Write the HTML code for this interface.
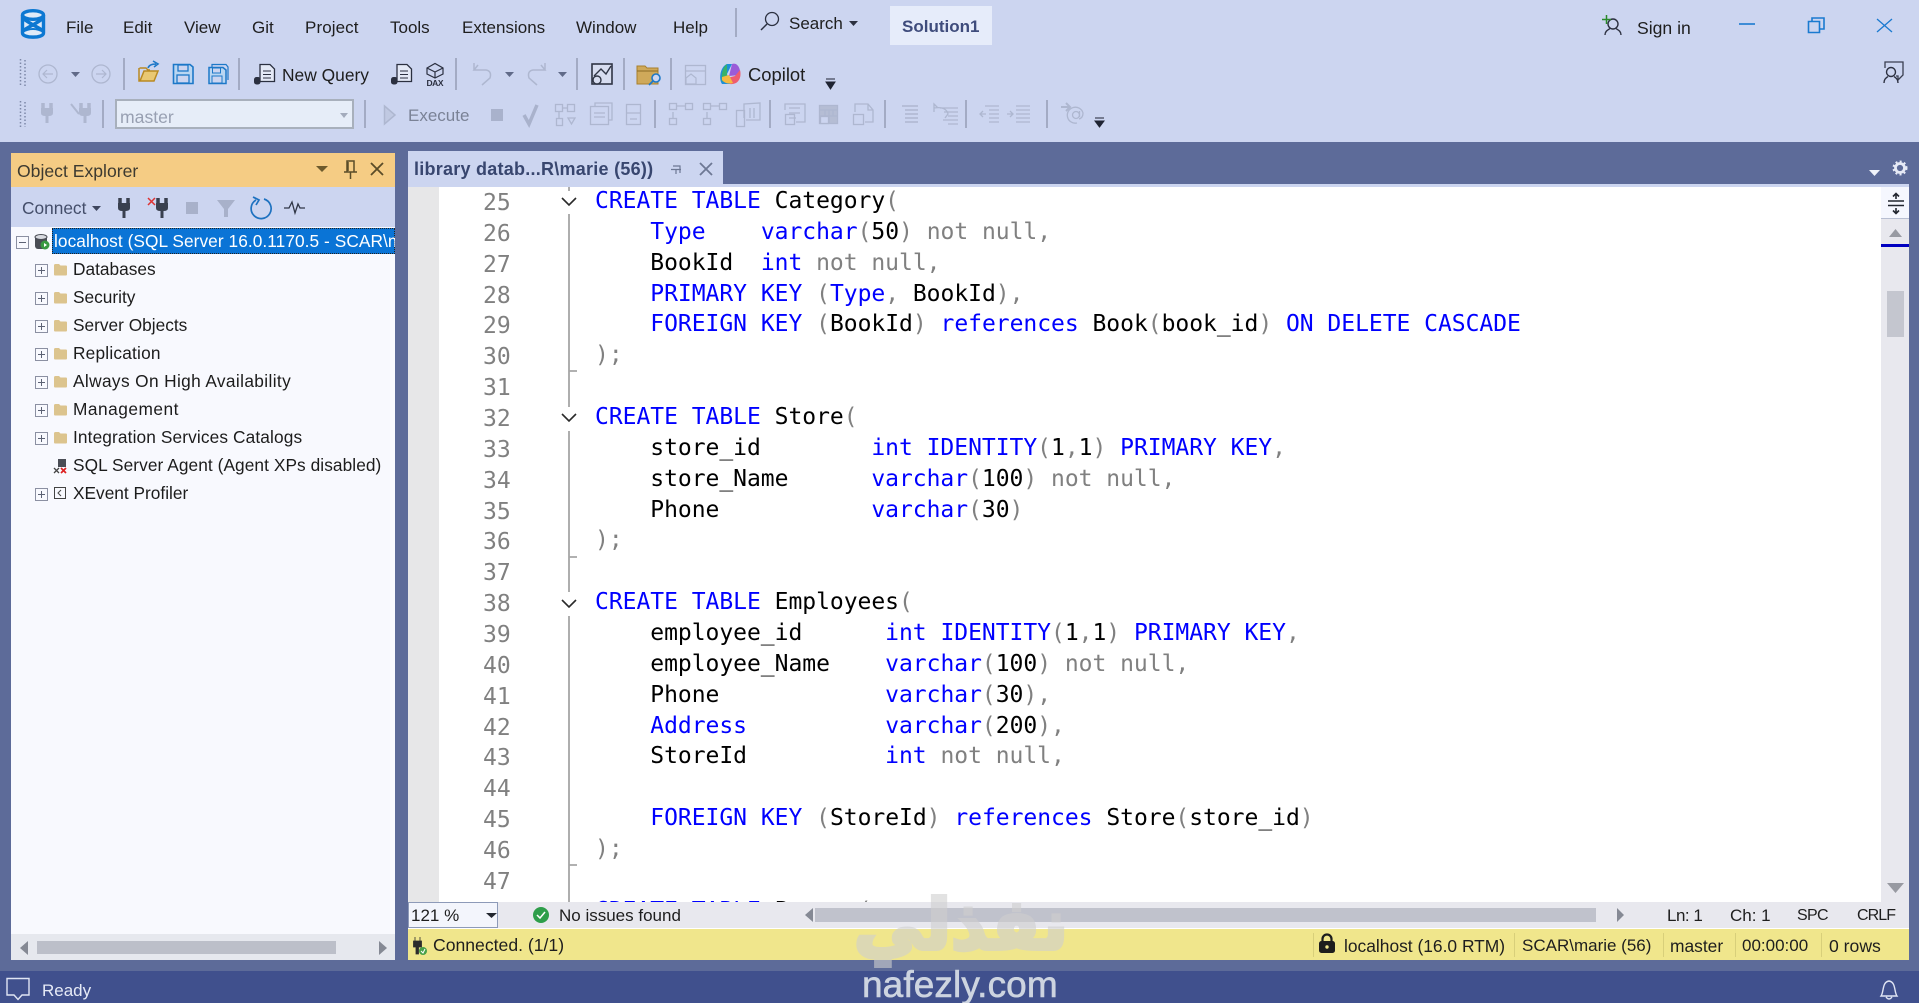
<!DOCTYPE html>
<html lang="en"><head><meta charset="utf-8"><title>SSMS</title>
<style>
html,body{margin:0;padding:0;width:1919px;height:1003px;overflow:hidden;background:#5d6b99}
body{position:relative;font-family:"Liberation Sans",sans-serif;font-size:17px;color:#1e1e1e}
.r{position:absolute}
.t{position:absolute;white-space:nowrap;line-height:20px;height:20px}
.ot{font-size:17.3px;color:#1c1c1c}
.sep{position:absolute;width:2px;background:#a3abc4}
pre{position:absolute;margin:0;font-family:"DejaVu Sans Mono",monospace;font-size:23px;line-height:30.86px;letter-spacing:-.03px}
.b{color:#0000ff}.g{color:#808080}
.s{position:absolute;width:1px;top:933px;height:24px;background:#d8cf7a}
</style></head><body>
<!-- backgrounds -->
<div class="r" style="left:0;top:0;width:1919px;height:142px;background:#ccd5f0"></div>
<div class="r" style="left:0;top:971px;width:1919px;height:32px;background:#40508d"></div>
<div class="r" style="left:11px;top:153px;width:384px;height:34px;background:#f5cc84"></div>
<div class="r" style="left:11px;top:187px;width:384px;height:40px;background:#ccd5f0"></div>
<div class="r" style="left:11px;top:227px;width:384px;height:707px;background:#f8f9fe"></div>
<div class="r" style="left:11px;top:934px;width:384px;height:26px;background:#e6e8ee"></div>
<div class="r" style="left:37px;top:941px;width:299px;height:13px;background:#bcbfc9"></div>
<div class="r" style="left:52px;top:228px;width:343px;height:26px;background:#0a74d6;outline:1px dotted #222;outline-offset:-1px"></div>
<div class="r" style="left:408px;top:151px;width:315px;height:33px;background:#ccd5f0"></div>
<div class="r" style="left:408px;top:184px;width:1501px;height:3px;background:#ccd5f0"></div>
<div class="r" style="left:408px;top:187px;width:1473px;height:715px;background:#fff"></div>
<div class="r" style="left:408px;top:187px;width:31px;height:715px;background:#e7e7e8"></div>
<div class="r" style="left:1881px;top:187px;width:28px;height:715px;background:#e8e8ee"></div>
<div class="r" style="left:1881px;top:187px;width:28px;height:32px;background:#f5f7fe;border-bottom:1px solid #b8bfd2;box-sizing:border-box"></div>
<div class="r" style="left:1881px;top:244px;width:28px;height:3px;background:#0000c0"></div>
<div class="r" style="left:1887px;top:291px;width:17px;height:46px;background:#c4c6cf"></div>

<!-- code -->
<div class="r" style="left:439px;top:187px;width:1442px;height:715px;overflow:hidden">
<pre class="g" style="left:44px;top:1px;color:#808080">25
26
27
28
29
30
31
32
33
34
35
36
37
38
39
40
41
42
43
44
45
46
47</pre>
<pre style="left:156px;top:-1px;color:#000"><span class="b">CREATE TABLE</span> Category<span class="g">(</span>
    <span class="b">Type</span>    <span class="b">varchar</span><span class="g">(</span>50<span class="g">)</span> <span class="g">not null,</span>
    BookId  <span class="b">int</span> <span class="g">not null,</span>
    <span class="b">PRIMARY KEY</span> <span class="g">(</span><span class="b">Type</span><span class="g">,</span> BookId<span class="g">),</span>
    <span class="b">FOREIGN KEY</span> <span class="g">(</span>BookId<span class="g">)</span> <span class="b">references</span> Book<span class="g">(</span>book_id<span class="g">)</span> <span class="b">ON DELETE CASCADE</span>
<span class="g">);</span>

<span class="b">CREATE TABLE</span> Store<span class="g">(</span>
    store_id        <span class="b">int IDENTITY</span><span class="g">(</span>1<span class="g">,</span>1<span class="g">)</span> <span class="b">PRIMARY KEY</span><span class="g">,</span>
    store_Name      <span class="b">varchar</span><span class="g">(</span>100<span class="g">)</span> <span class="g">not null,</span>
    Phone           <span class="b">varchar</span><span class="g">(</span>30<span class="g">)</span>
<span class="g">);</span>

<span class="b">CREATE TABLE</span> Employees<span class="g">(</span>
    employee_id      <span class="b">int IDENTITY</span><span class="g">(</span>1<span class="g">,</span>1<span class="g">)</span> <span class="b">PRIMARY KEY</span><span class="g">,</span>
    employee_Name    <span class="b">varchar</span><span class="g">(</span>100<span class="g">)</span> <span class="g">not null,</span>
    Phone            <span class="b">varchar</span><span class="g">(</span>30<span class="g">),</span>
    <span class="b">Address</span>          <span class="b">varchar</span><span class="g">(</span>200<span class="g">),</span>
    StoreId          <span class="b">int</span> <span class="g">not null,</span>

    <span class="b">FOREIGN KEY</span> <span class="g">(</span>StoreId<span class="g">)</span> <span class="b">references</span> Store<span class="g">(</span>store_id<span class="g">)</span>
<span class="g">);</span>

<span class="b">CREATE TABLE</span> Person<span class="g">(</span></pre>
</div>

<!-- editor bottom -->
<div class="r" style="left:408px;top:902px;width:1501px;height:26px;background:#e8e8ee"></div>
<div class="r" style="left:408px;top:928px;width:1501px;height:1px;background:#fff"></div>
<div class="r" style="left:408px;top:929px;width:1501px;height:31px;background:#f0e68c"></div>
<div class="r" style="left:408px;top:902px;width:90px;height:26px;box-sizing:border-box;background:#f3f5fc;border:1px solid #8d9ab8"></div>
<div class="r" style="left:815px;top:908px;width:781px;height:14px;background:#c0c2cc"></div>
<div class="s" style="left:1313px"></div><div class="s" style="left:1514px"></div><div class="s" style="left:1663px"></div><div class="s" style="left:1735px"></div><div class="s" style="left:1821px"></div>

<!-- separators -->
<div class="sep" style="left:123px;top:58px;height:32px"></div>
<div class="sep" style="left:238px;top:58px;height:32px"></div>
<div class="sep" style="left:455px;top:58px;height:32px"></div>
<div class="sep" style="left:576px;top:58px;height:32px"></div>
<div class="sep" style="left:623px;top:58px;height:32px"></div>
<div class="sep" style="left:670px;top:58px;height:32px"></div>
<div class="sep" style="left:735px;top:8px;height:29px"></div>
<div class="sep" style="left:102px;top:100px;height:28px"></div>
<div class="sep" style="left:364px;top:100px;height:28px"></div>
<div class="sep" style="left:654px;top:100px;height:28px"></div>
<div class="sep" style="left:769px;top:100px;height:28px"></div>
<div class="sep" style="left:884px;top:100px;height:28px"></div>
<div class="sep" style="left:965px;top:100px;height:28px"></div>
<div class="sep" style="left:1046px;top:100px;height:28px"></div>

<!-- Solution / combos -->
<div class="r" style="left:890px;top:6px;width:102px;height:39px;background:#e6ecfa"></div>
<div class="r" style="left:115px;top:99px;width:239px;height:30px;box-sizing:border-box;background:#e6edf8;border:2px solid #a8b0bc"></div>

<!-- icons -->
<svg class="r" style="left:0;top:0" width="1919" height="1003" viewBox="0 0 1919 1003" fill="none">
<defs>
<path id="fold" d="M0 2.500Q0 1 1.500 1H5L6.500 2.500H12Q13 2.500 13 3.500V11.500Q13 12.500 12 12.500H1Q0 12.500 0 11.500Z" fill="#dcc48e"/>
<g id="plus"><rect x=".5" y=".5" width="12" height="12" fill="#f8f9fe" stroke="#8b90a2"/><path d="M3 6.500H10M6.500 3V10" stroke="#5c6274"/></g>
<g id="plug"><path d="M-4 -10V-5M4 -10V-5" stroke-width="3.500"/><path d="M-6 -5H6V0Q6 3 1.500 3V10H-1.500V3Q-6 3 -6 0Z" stroke="none"/></g>
</defs>
<!-- SSMS logo -->
<path d="M22.500 15V33C22.500 38.500 43.500 38.500 43.500 33V15Z" fill="#dfeaf8"/>
<g stroke="#0d78d2" stroke-width="3.400">
<ellipse cx="33" cy="15" rx="10.500" ry="4.300" fill="#dfeaf8"/>
<path d="M22.500 15V33C22.500 38.500 43.500 38.500 43.500 33V15"/>
<path d="M22.500 31C30 26 36 24 43.500 18"/>
<path d="M22.500 18C30 24 36 26 43.500 31"/>
<path d="M22.500 32C29 28 37 28 43.500 32" stroke-width="2"/>
</g>
<!-- search -->
<circle cx="772" cy="19" r="6.500" stroke="#2b3040" stroke-width="1.300"/><path d="M767 24L761 30" stroke="#2b3040" stroke-width="1.500"/>
<path d="M849 21H858L853.500 26Z" fill="#2b3040"/>
<!-- sign in -->
<circle cx="1613" cy="24" r="5" stroke="#2c3040" stroke-width="1.400"/><path d="M1605 35C1605 31 1608 30 1610 28.500M1621 35C1621 31 1618 30 1616 28.500" stroke="#2c3040" stroke-width="1.400"/><path d="M1602 19.500H1611M1606.500 15V24" stroke="#2a8a2a" stroke-width="1.500"/>
<path d="M1739 24H1755" stroke="#1a7ad0" stroke-width="1.600"/>
<path d="M1808.500 21.500H1819.500V32.500H1808.500ZM1812 21V18H1824V29H1820" stroke="#1a7ad0" stroke-width="1.600"/>
<path d="M1877 19L1892 32M1892 19L1877 32" stroke="#1a7ad0" stroke-width="1.300"/>
<path d="M1885 68V62H1903V75L1898 80V76H1896" stroke="#3a3f50" stroke-width="1.300"/><circle cx="1891" cy="72" r="4.500" stroke="#2c3040" stroke-width="1.400" fill="#ccd5f0"/><path d="M1884 83C1884 79 1886 78 1888 76.500M1898 83C1898 79 1896 78 1894 76.500" stroke="#2c3040" stroke-width="1.400"/>
<!-- grips -->
<g stroke="#7d88a8" stroke-width="1.500" stroke-dasharray="1.500 2"><path d="M20.500 59V87M25 60V87M20.500 101V127M25 102V127"/></g>
<!-- row1 -->
<circle cx="48" cy="74" r="9" stroke="#aeb7d0" stroke-width="1.300"/><path d="M53 74H43M47 70L43 74L47 78" stroke="#aeb7d0" stroke-width="1.200"/>
<path d="M71 72H80L75.500 77Z" fill="#606a88"/>
<circle cx="101" cy="74" r="9" stroke="#aeb7d0" stroke-width="1.300"/><path d="M96 74H106M102 70L106 74L102 78" stroke="#aeb7d0" stroke-width="1.200"/>
<path d="M139 68V81H154L158 71H144L140 81" stroke="#b98a22" stroke-width="1.500" fill="#e9c873"/><path d="M139.500 68H146L148 70H150" stroke="#b98a22" stroke-width="1.500"/><path d="M148 68C149 65 152 64 156 64M153 61L158 64L154 67" stroke="#1d78c8" stroke-width="1.600"/>
<path d="M173.500 64.500H190L193 67V83.500H173.500Z" stroke="#1d78c8" stroke-width="1.600" fill="#b9d6f2"/><rect x="178" y="65" width="10" height="6" fill="#ccd5f0" stroke="#1d78c8" stroke-width="1.300"/><rect x="177" y="75" width="12" height="8" fill="#ccd5f0" stroke="#1d78c8" stroke-width="1.300"/>
<path d="M209 67.500H223L226 70V83.500H209Z" stroke="#1d78c8" stroke-width="1.500" fill="#b9d6f2"/><path d="M212 67V64.500H226L228 67V80" stroke="#1d78c8" stroke-width="1.200"/><rect x="212.500" y="68" width="8" height="5" stroke="#1d78c8" fill="#ccd5f0"/><rect x="212" y="76" width="10" height="7" stroke="#1d78c8" fill="#ccd5f0"/>
<path d="M260 64.500H270L274.500 69V81.500H260Z" stroke="#2b3040" stroke-width="1.300" fill="#e4e9f6"/><path d="M263 71H271M263 74.500H271M263 78H271" stroke="#2b3040"/><rect x="254" y="77" width="6.500" height="7.500" rx="2.500" fill="#2b3040"/>
<path d="M397 64.500H407L411.500 69V81.500H397Z" stroke="#2b3040" stroke-width="1.300" fill="#e4e9f6"/><path d="M400 71H408M400 74.500H408M400 78H408" stroke="#2b3040"/><rect x="391" y="77" width="6.500" height="7.500" rx="2.500" fill="#2b3040"/>
<path d="M427 68L435 63.500L443 68V74L435 78L427 74ZM427 68L435 72L443 68M435 72V78" stroke="#2b3040" stroke-width="1.200"/>
<text x="435" y="86" text-anchor="middle" font-family="Liberation Sans,sans-serif" font-size="8.500" font-weight="bold" fill="#2b3040" textLength="17">DAX</text>
<path d="M478 65L474 70H486Q492 71 490 78L482 85M474 70V63" stroke="#aeb7d0" stroke-width="1.500"/>
<path d="M505 72H514L509.500 77Z" fill="#606a88"/>
<path d="M541 65L545 70H533Q527 71 529 78L537 85M545 70V63" stroke="#aeb7d0" stroke-width="1.500"/>
<path d="M558 72H567L562.500 77Z" fill="#606a88"/>
<rect x="592" y="64" width="20" height="20" stroke="#2f3545" stroke-width="1.600" fill="#d7ddf0"/><path d="M594 76L601 69L606 74L611 66" stroke="#2f3545" stroke-width="1.400"/><circle cx="597" cy="80" r="4" fill="#d7ddf0" stroke="#2f3545" stroke-width="1.400"/>
<path d="M637 66H645L647 68H658V84H637Z" fill="#cfa95a" stroke="#a8802c"/><path d="M637 71H658" stroke="#8b6b25"/><circle cx="656" cy="78" r="4" fill="#ccd5f0" stroke="#1d78c8" stroke-width="1.600"/><path d="M653 81L649 85" stroke="#1d78c8" stroke-width="1.800"/>
<rect x="685.500" y="65.500" width="20" height="19" stroke="#aeb7d0" stroke-width="1.300"/><path d="M686 71H705" stroke="#aeb7d0" stroke-width="1.300"/><path d="M686 78L691 74L696 78V84H686Z" stroke="#aeb7d0" stroke-width="1.200" fill="#ccd5f0"/>
<!-- copilot -->
<path d="M722 84C718 78 721 66 727 64H732L727 74L730 84Z" fill="#1e8fd8"/><path d="M727 64C722 68 721 76 722 82L727 76Z" fill="#37b26a"/><path d="M732 64C738 62 741 70 740 75L729 76Z" fill="#9a5bd8"/><path d="M740 70C742 78 738 85 730 84L727 78L735 76Z" fill="#ef5d6e"/><path d="M722 80C725 84 730 84 733 83L729 75L722 77Z" fill="#f5b93f"/>
<path d="M826 79H835M826 82H835L830.500 89Z" stroke="#1f2433" fill="#1f2433"/>
<!-- row2 -->
<g fill="#aeb7d0" stroke="#aeb7d0"><use href="#plug" x="47" y="113"/></g>
<g fill="#aeb7d0" stroke="#aeb7d0"><use href="#plug" x="85" y="113"/></g>
<path d="M71 104L79 114" stroke="#aeb7d0" stroke-width="2"/>
<path d="M340 113H348L344 118Z" fill="#a3abbc"/>
<path d="M384.500 106L395 115L384.500 124Z" stroke="#aeb7d0" stroke-width="1.500" fill="#c0c9e2"/>
<rect x="491" y="109" width="12" height="12" fill="#a9b2cc"/>
<path d="M524 115L529 124L537 105" stroke="#a9b2cc" stroke-width="3.500"/>
<g stroke="#aeb7d0" stroke-width="1.300">
<rect x="555.500" y="104.500" width="7" height="7"/><rect x="567.500" y="104.500" width="7" height="7"/><rect x="556.500" y="118.500" width="6" height="7"/><path d="M568 118H575L571.500 124Z"/><path d="M559 112V118M563 108H567"/>
<rect x="590.500" y="106.500" width="18" height="18"/><path d="M595 106V103H612V120H608M594 113H605M594 117H605"/>
<rect x="626.500" y="104.500" width="14" height="20"/><path d="M627 113H640M630 119H637"/>
<rect x="669.500" y="103.500" width="7" height="6"/><rect x="685.500" y="103.500" width="7" height="6"/><path d="M677 106H685M673 112V118"/><rect x="669.500" y="118.500" width="7" height="6"/>
<rect x="703.500" y="103.500" width="7" height="6"/><rect x="719.500" y="103.500" width="7" height="6"/><path d="M711 106H719M707 112V118"/><rect x="703.500" y="118.500" width="7" height="6"/>
<rect x="736.500" y="110.500" width="8" height="16"/><path d="M744 118V104L760 103V120H746M750 108V118M754 108V118"/>
<path d="M785 110V104H805V122H796M789 108H800M789 113H800M789 118H796"/><rect x="785.500" y="114.500" width="9" height="10"/>
<rect x="819.500" y="105.500" width="18" height="18" fill="#b5bdd4"/><path d="M820 110H838M820 116H838M829 110V124M825 110V116M833 110V116"/><rect x="820.500" y="116.500" width="8" height="7" fill="#ccd5f0"/>
<path d="M855 112V104H868L873 110V122H865M868 104V110H873"/><rect x="853.500" y="114.500" width="10" height="10"/>
<path d="M902 106H918M905 110H918M905 114H918M905 118H918M905 122H918" stroke-width="1.600"/>
<path d="M938 108L934 104V112M934 108Q946 106 948 114L945 118M940 108H958M944 112H958M948 116H958M943 120H958M948 124H958" />
<path d="M985 106H999M989 110H999M989 114H999M989 118H999M989 122H999M986 114H980M983 111L980 114L983 117"/>
<path d="M1016 106H1030M1016 110H1030M1016 114H1030M1016 118H1030M1016 122H1030M1007 114H1013M1010 111L1013 114L1010 117"/>
<path d="M1061 107H1070M1066 103L1070 107L1066 111" stroke-width="2"/><circle cx="1076" cy="115" r="3.500"/><path d="M1079 119Q1083 118 1083 113A8 8 0 1 0 1077 123"/><path d="M1079.500 111V117"/>
</g>
<path d="M1095 118H1104M1095 121H1104L1099.500 127Z" stroke="#1f2433" fill="#1f2433"/>
<!-- OE header -->
<path d="M316 166H328L322 172Z" fill="#6d5a2c"/>
<path d="M347 161H354V172H347ZM344 172H357M350.500 172V179M348 162V171" stroke="#5a4c28" stroke-width="1.500"/>
<path d="M371 163L383 175M383 163L371 175" stroke="#5a4c28" stroke-width="1.800"/>
<path d="M92 206H101L96.500 211Z" fill="#3e465e"/>
<!-- OE toolbar -->
<g fill="#39404f" stroke="#39404f"><use href="#plug" x="124" y="208"/><use href="#plug" x="162" y="208"/></g>
<path d="M148 198L155 205M155 198L148 205" stroke="#d33" stroke-width="1.500"/>
<rect x="186" y="202" width="12" height="12" fill="#a8b1ca"/>
<path d="M217 200H235L228 209V217H224V209Z" fill="#a8b1ca"/>
<path d="M253 197L259 200L256 205M256 200A10 10 0 1 0 264 199" stroke="#1e72c0" stroke-width="1.700"/>
<path d="M284 208H289L292 202L295 213L298 204L300 208H305" stroke="#303646" stroke-width="1.300"/>
<!-- tree -->
<rect x="16.500" y="236.500" width="12" height="12" fill="#f8f9fe" stroke="#8b90a2"/><path d="M19 242.500H26" stroke="#5c6274"/>
<rect x="35" y="235" width="12" height="14" rx="3" fill="#4a4d55"/><ellipse cx="41" cy="237" rx="6" ry="2.500" fill="#d8dae0" stroke="#4a4d55"/><circle cx="45" cy="245" r="4.500" fill="#3a9a42"/><path d="M44 243L47 245L44 247Z" fill="#fff"/>
<use href="#plus" x="35" y="264"/><use href="#fold" x="54" y="263"/>
<use href="#plus" x="35" y="292"/><use href="#fold" x="54" y="291"/>
<use href="#plus" x="35" y="320"/><use href="#fold" x="54" y="319"/>
<use href="#plus" x="35" y="348"/><use href="#fold" x="54" y="347"/>
<use href="#plus" x="35" y="376"/><use href="#fold" x="54" y="375"/>
<use href="#plus" x="35" y="404"/><use href="#fold" x="54" y="403"/>
<use href="#plus" x="35" y="432"/><use href="#fold" x="54" y="431"/>
<use href="#plus" x="35" y="488"/>
<rect x="58" y="459" width="8" height="8" fill="#4a4d55"/><path d="M54 468L59 473M59 468L54 473" stroke="#444" stroke-width="1.300"/><path d="M61 468L66 473M66 468L61 473" stroke="#d22" stroke-width="1.700"/>
<rect x="54.500" y="487.500" width="11" height="11" stroke="#444" fill="#f8f9fe"/><path d="M61 490L58 493L61 496" stroke="#444"/>
<!-- OE scroll arrows -->
<path d="M20 948L28 941V955Z" fill="#858994"/><path d="M387 948L379 941V955Z" fill="#858994"/>
<!-- tab -->
<path d="M671 169.500H681M676 169.500V174M673 166H680V173" stroke="#6d7894" stroke-width="1.200"/>
<path d="M700 163L712 175M712 163L700 175" stroke="#6d7894" stroke-width="1.800"/>
<path d="M1869 170H1880L1874.500 176Z" fill="#f0f3fa"/>
<circle cx="1900" cy="168" r="4.500" stroke="#e6eaf6" stroke-width="2.800"/><circle cx="1900" cy="168" r="6.500" stroke="#e6eaf6" stroke-width="2" stroke-dasharray="2 2.300"/>
<!-- split -->
<path d="M1888 201H1904M1888 205.500H1904M1896 194V199M1896 208V213M1893 196.500L1896 193.500L1899 196.500M1893 210.500L1896 213.500L1899 210.500" stroke="#22262f" stroke-width="1.600"/>
<path d="M1889 237L1895.500 229L1902 237Z" fill="#989aa2"/><path d="M1887 883H1904L1895.500 893Z" fill="#989aa2"/>
<!-- fold margin -->
<g stroke="#a6a6a6" stroke-width="1.800">
<path d="M569 187V191M569 214V371H577M569 371V407M569 431V557H577M569 557V592M569 616V865H577M569 865V902"/>
</g>
<g stroke="#2a2a2a" stroke-width="1.600"><path d="M562 198L569 205L576 198"/><path d="M562 414L569 421L576 414"/><path d="M562 600L569 607L576 600"/></g>
<!-- bottom -->
<path d="M486 913H497L491.500 918Z" fill="#22262f"/>
<circle cx="541" cy="915" r="8" fill="#2e9e4a"/><path d="M537 915L540 918L545 912" stroke="#fff" stroke-width="1.500"/>
<path d="M805 915L813 908V922Z" fill="#858994"/><path d="M1624 915L1617 908V922Z" fill="#858994"/>
<path d="M415 937V941M420 937V941M413.500 941H421.500V947H418.500V954H416V947H413.500Z" fill="#2c2c2c" stroke="#2c2c2c" stroke-width=".8"/><circle cx="423" cy="951" r="4" fill="#48a048"/><path d="M421 951L423 953L425 949" stroke="#fff"/>
<rect x="1319" y="941" width="16" height="12" rx="2.500" fill="#1d1d1d"/><path d="M1322.500 942V939A4.500 4.500 0 0 1 1331.500 939V942" stroke="#1d1d1d" stroke-width="2.200"/><circle cx="1327" cy="947" r="1.700" fill="#f0e68c"/>
<path d="M7 978.500H29V995H22L18 999.500L14 995H7Z" stroke="#e0e5f4" stroke-width="1.400"/>
<path d="M1881 996C1884 992 1882 982 1889 981C1896 982 1894 992 1897 996Z M1886 997Q1889 1001 1892 997" stroke="#e0e5f4" stroke-width="1.400"/>
</svg>

<!-- menu -->
<span class="t" style="left:66px;top:18px">File</span>
<span class="t" style="left:123px;top:18px">Edit</span>
<span class="t" style="left:184px;top:18px">View</span>
<span class="t" style="left:252px;top:18px">Git</span>
<span class="t" style="left:305px;top:18px;letter-spacing:.1px">Project</span>
<span class="t" style="left:390px;top:18px">Tools</span>
<span class="t" style="left:462px;top:18px">Extensions</span>
<span class="t" style="left:576px;top:18px">Window</span>
<span class="t" style="left:673px;top:18px">Help</span>
<span class="t" style="left:789px;top:14px">Search</span>
<span class="t" style="left:902px;top:17px;color:#3f4c7c;font-weight:bold;font-size:17px">Solution1</span>
<span class="t" style="left:1637px;top:18px;font-size:17.6px">Sign in</span>
<span class="t" style="left:282px;top:65px;font-size:17.4px">New Query</span>
<span class="t" style="left:748px;top:65px;font-size:18.4px">Copilot</span>
<span class="t" style="left:120px;top:107px;color:#98a0b2;font-size:17.6px">master</span>
<span class="t" style="left:408px;top:106px;color:#7a8296">Execute</span>
<!-- OE -->
<span class="t ot" style="left:17px;top:161px;color:#3d3a30;font-size:17.6px">Object Explorer</span>
<span class="t ot" style="left:22px;top:198px;color:#444e6a">Connect</span>
<span class="t ot" style="left:54px;top:231px;width:341px;overflow:hidden;color:#fff;letter-spacing:.06px">localhost (SQL Server 16.0.1170.5 - SCAR\marie)</span>
<span class="t ot" style="left:73px;top:259px">Databases</span>
<span class="t ot" style="left:73px;top:287px">Security</span>
<span class="t ot" style="left:73px;top:315px">Server Objects</span>
<span class="t ot" style="left:73px;top:343px;letter-spacing:.2px">Replication</span>
<span class="t ot" style="left:73px;top:371px;letter-spacing:.37px">Always On High Availability</span>
<span class="t ot" style="left:73px;top:399px;letter-spacing:.5px">Management</span>
<span class="t ot" style="left:73px;top:427px;letter-spacing:.12px">Integration Services Catalogs</span>
<span class="t ot" style="left:73px;top:455px;letter-spacing:.07px">SQL Server Agent (Agent XPs disabled)</span>
<span class="t ot" style="left:73px;top:483px">XEvent Profiler</span>
<!-- tab -->
<span class="t" style="left:414px;top:159px;color:#38466f;font-weight:bold;font-size:18px;letter-spacing:.25px">library datab...R\marie (56))</span>
<!-- bottom text -->
<span class="t" style="left:411px;top:906px">121 %</span>
<span class="t" style="left:559px;top:906px">No issues found</span>
<span class="t" style="left:1667px;top:906px;letter-spacing:-.5px">Ln: 1</span>
<span class="t" style="left:1730px;top:906px">Ch: 1</span>
<span class="t" style="left:1797px;top:906px;font-size:16px;letter-spacing:-.7px">SPC</span>
<span class="t" style="left:1857px;top:906px;font-size:16px;letter-spacing:-.9px">CRLF</span>
<span class="t" style="left:433px;top:935px;font-size:17.6px">Connected. (1/1)</span>
<span class="t" style="left:1344px;top:936px;font-size:17.4px">localhost (16.0 RTM)</span>
<span class="t" style="left:1522px;top:936px">SCAR\marie (56)</span>
<span class="t" style="left:1670px;top:936px;font-size:17.4px">master</span>
<span class="t" style="left:1742px;top:936px">00:00:00</span>
<span class="t" style="left:1829px;top:936px;font-size:17.6px">0 rows</span>
<span class="t" style="left:42px;top:981px;color:#e6eaf6">Ready</span>
<!-- watermark -->
<span class="r" dir="rtl" style="left:840px;top:880px;width:242px;text-align:center;white-space:nowrap;font-family:'DejaVu Sans',sans-serif;font-weight:bold;font-size:70px;line-height:90px;color:#cfcfcf;-webkit-text-stroke:4px #cfcfcf;opacity:.6">نفذلي</span>
<span class="r" style="left:862px;top:964px;font-size:37px;line-height:42px;letter-spacing:.1px;color:#cdd4e0;-webkit-text-stroke:.6px #cdd4e0;white-space:nowrap">nafezly.com</span>
</body></html>
